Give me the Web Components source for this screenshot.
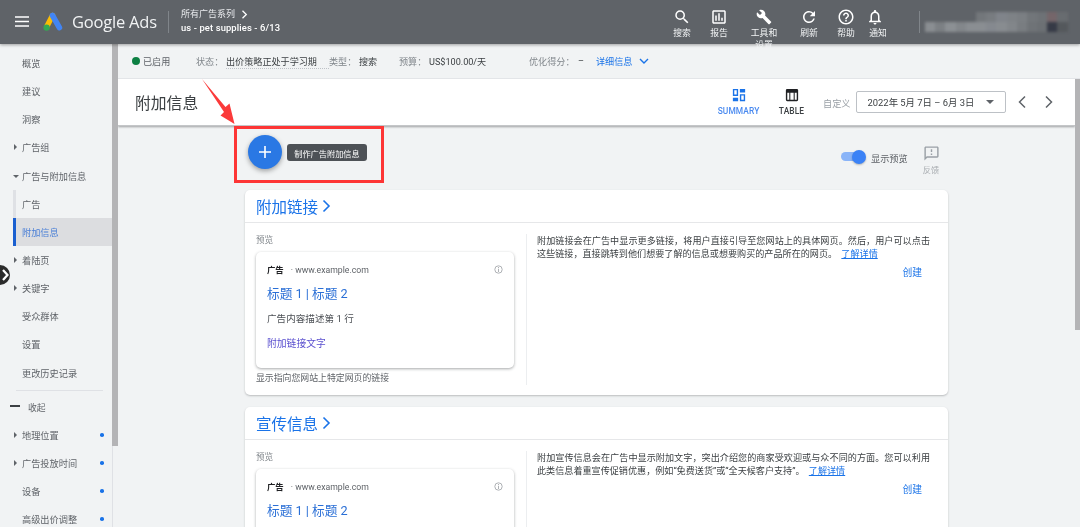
<!DOCTYPE html>
<html lang="zh-CN"><head><meta charset="utf-8"><title>Google Ads</title>
<style>
html,body{margin:0;padding:0;width:1080px;height:527px;overflow:hidden;background:#f1f3f4;
font-family:Roboto,"Noto Sans CJK SC",sans-serif;color:#3c4043}
a{color:inherit}
</style></head><body>
<ga-app>
  <ga-header slot="header"></ga-header>
  <ga-sidebar slot="sidebar">
    <ga-nav>概览</ga-nav><ga-nav>建议</ga-nav><ga-nav>洞察</ga-nav>
    <ga-nav arrow="right">广告组</ga-nav>
    <ga-nav arrow="down">广告与附加信息</ga-nav>
    <ga-nav sub>广告</ga-nav>
    <ga-nav sub active>附加信息</ga-nav>
    <ga-nav arrow="right">着陆页</ga-nav>
    <ga-nav arrow="right">关键字</ga-nav>
    <ga-nav>受众群体</ga-nav><ga-nav>设置</ga-nav><ga-nav>更改历史记录</ga-nav>
    <ga-nav-collapse>收起</ga-nav-collapse>
    <ga-nav arrow="right" dot>地理位置</ga-nav>
    <ga-nav arrow="right" dot>广告投放时间</ga-nav>
    <ga-nav dot>设备</ga-nav>
    <ga-nav dot>高级出价调整</ga-nav>
  </ga-sidebar>
  <ga-status slot="status"></ga-status>
  <ga-title slot="title"></ga-title>
  <ga-toolbar slot="content"></ga-toolbar>
  <ga-card slot="content" heading="附加链接" caption="显示指向您网站上特定网页的链接">
    附加链接会在广告中显示更多链接，将用户直接引导至您网站上的具体网页。然后，用户可以点击这些链接，直接跳转到他们想要了解的信息或想要购买的产品所在的网页。
  </ga-card>
  <ga-card slot="content" heading="宣传信息">
    附加宣传信息会在广告中显示附加文字，突出介绍您的商家受欢迎或与众不同的方面。您可以利用此类信息着重宣传促销优惠，例如“免费送货”或“全天候客户支持”。
  </ga-card>
  <ga-annotation slot="overlay"></ga-annotation>
</ga-app>
<script>
const def=(name,html,extra)=>{
  const t=document.createElement('template');t.innerHTML=html;
  customElements.define(name,class extends HTMLElement{
    constructor(){super();this.attachShadow({mode:'open'}).appendChild(t.content.cloneNode(true));}
    connectedCallback(){if(extra)extra(this,this.shadowRoot);}
  });
};
const P={
 search:'M15.5 14h-.79l-.28-.27A6.471 6.471 0 0 0 16 9.5 6.5 6.5 0 1 0 9.5 16c1.61 0 3.09-.59 4.23-1.57l.27.28v.79l5 4.99L20.49 19l-4.99-5zm-6 0C7.01 14 5 11.99 5 9.5S7.01 5 9.5 5 14 7.01 14 9.5 11.99 14 9.5 14z',
 report:'M19 3H5c-1.1 0-2 .9-2 2v14c0 1.1.9 2 2 2h14c1.1 0 2-.9 2-2V5c0-1.1-.9-2-2-2zm0 16H5V5h14v14zM7 10h2v7H7zm4-3h2v10h-2zm4 6h2v4h-2z',
 build:'M22.7 19l-9.1-9.1c.9-2.3.4-5-1.5-6.9-2-2-5-2.4-7.4-1.3L9 6 6 9 1.6 4.7C.4 7.1.9 10.1 2.9 12.1c1.9 1.9 4.6 2.4 6.9 1.5l9.1 9.1c.4.4 1 .4 1.4 0l2.3-2.3c.5-.4.5-1.1.1-1.4z',
 refresh:'M17.65 6.35A7.958 7.958 0 0 0 12 4c-4.42 0-7.99 3.58-7.99 8s3.57 8 7.99 8c3.73 0 6.84-2.55 7.73-6h-2.08A5.99 5.99 0 0 1 12 18c-3.31 0-6-2.69-6-6s2.69-6 6-6c1.66 0 3.14.69 4.22 1.78L13 11h7V4l-2.35 2.35z',
 help:'M11 18h2v-2h-2v2zm1-16C6.48 2 2 6.48 2 12s4.48 10 10 10 10-4.48 10-10S17.52 2 12 2zm0 18c-4.41 0-8-3.59-8-8s3.59-8 8-8 8 3.59 8 8-3.59 8-8 8zm0-14c-2.21 0-4 1.79-4 4h2c0-1.1.9-2 2-2s2 .9 2 2c0 2-3 1.75-3 5h2c0-2.25 3-2.5 3-5 0-2.21-1.79-4-4-4z',
 bell:'M12 22c1.1 0 2-.9 2-2h-4c0 1.1.89 2 2 2zm6-6v-5c0-3.07-1.64-5.64-4.5-6.32V4c0-.83-.67-1.5-1.5-1.5s-1.5.67-1.5 1.5v.68C7.63 5.36 6 7.92 6 11v5l-2 2v1h16v-1l-2-2zm-2 1H8v-6c0-2.48 1.51-4.5 4-4.5s4 2.02 4 4.5v6z',
 feedback:'M20 2H4c-1.1 0-2 .9-2 2v18l4-4h14c1.1 0 2-.9 2-2V4c0-1.1-.9-2-2-2zm0 14H5.17L4 17.17V4h16v12zM11 12h2v2h-2zm0-6h2v4h-2z'
};
const svg=(d,s,c)=>`<svg width="${s}" height="${s}" viewBox="0 0 24 24" fill="${c}" aria-hidden="true"><path d="${d}"/></svg>`;

def('ga-app',`<style>
:host{display:grid;position:relative;width:1080px;height:527px;overflow:hidden;filter:blur(.3px);
grid-template-columns:118px 1fr;grid-template-rows:44px 35px 1fr;background:#f1f3f4}
.h{grid-column:1/3;grid-row:1;z-index:3;box-shadow:0 1px 3px rgba(0,0,0,.35)}
.s{grid-column:1;grid-row:2/4;min-height:0;overflow:hidden}
.st{grid-column:2;grid-row:2;min-width:0}
.m{grid-column:2;grid-row:3;display:flex;min-height:0;min-width:0}
.col{flex:1;min-width:0;display:flex;flex-direction:column;overflow:hidden}
.c{flex:1;min-height:0;display:flex;flex-direction:column;overflow:hidden}
.bar{width:5px;flex:none}.bar i{display:block;height:251px;background:#b4b4b6}
</style>
<div class="h"><slot name="header"></slot></div>
<div class="s"><slot name="sidebar"></slot></div>
<div class="st"><slot name="status"></slot></div>
<div class="m"><div class="col"><slot name="title"></slot><div class="c"><slot name="content"></slot></div></div>
<div class="bar"><i></i></div></div>
<slot name="overlay"></slot>`);

def('ga-header',`<style>
:host{display:flex;align-items:stretch;height:44px;background:#5f6368;color:#fff;position:relative}
.menu{margin:14px 0 0 15px;width:14px;height:15px}
.logo{margin:11px 0 0 13px;width:22px;height:22px}
.name{margin:0 0 0 8px;font:400 16.5px/44px "Open Sans",Roboto,sans-serif;letter-spacing:-.2px;width:84px;color:#f1f3f4;white-space:nowrap}
.sep{width:1px;height:22px;background:#80858a;margin:11px 12px 0 12px}
.crumb{width:260px;padding-top:7px;font-size:9px;line-height:14px}
.crumb div:first-child{color:#e8eaed;display:flex;align-items:center;gap:6px}
.crumb div:last-child{font-size:9.4px;font-weight:500;margin-top:0;letter-spacing:.12px;line-height:14px}
.tools{display:flex;margin-left:auto;align-items:flex-start}
.acc{width:161px;flex:none;display:flex;position:relative;margin-left:33px}
.acc b{display:block;width:1px;height:22px;background:#80858a;margin-top:11px}
.blur{display:grid;grid-template-columns:repeat(14,10.2px);grid-template-rows:10px 10px;margin:12px 0 0 5px;filter:blur(1.6px)}
.blur span{background:#7b7f84}
</style>
<svg class="menu" viewBox="0 0 14 15" aria-hidden="true"><path d="M0 2.2h14v1.6H0zM0 6.7h14v1.6H0zM0 11.2h14v1.6H0z" fill="#fff"/></svg>
<svg class="logo" viewBox="0 0 22 22" aria-hidden="true">
<path d="M10.5 4.5 4.8 15.5" stroke="#fbbc04" stroke-width="5.4" stroke-linecap="round" fill="none"/>
<circle cx="4.6" cy="16.6" r="3.2" fill="#34a853"/>
<path d="M10.5 4.5 17.4 16.6" stroke="#4285f4" stroke-width="5.6" stroke-linecap="round" fill="none"/></svg>
<div class="name">Google Ads</div><div class="sep"></div>
<div class="crumb"><div>所有广告系列 <svg width="7" height="9" viewBox="0 0 7 9" aria-hidden="true"><path d="M1.5 .8 5.3 4.5 1.5 8.2" fill="none" stroke="#fff" stroke-width="1.3"/></svg></div><div>us - pet supplies - 6/13</div></div>
<div class="tools">
<ga-tool w="36" icon="search">搜索</ga-tool><ga-tool w="38" icon="report">报告</ga-tool>
<ga-tool w="52" icon="build" wrap>工具和设置</ga-tool><ga-tool w="38" icon="refresh">刷新</ga-tool>
<ga-tool w="36" icon="help">帮助</ga-tool><ga-tool w="22" icon="bell">通知</ga-tool></div>
<div class="acc"><b></b><div class="blur" id="b"></div></div>`,(el,r)=>{
 const g=r.getElementById('b');if(g.children.length)return;
 const rows=[['','','','','','#73777b','#787c80','#80848a','#7e8286','#7b7f83','#72767a','#6e7276','#75666a','#686c70'],
 ['#8a8e92','#7c8084','#8c9094','#83878b','#8a8e92','#8a8e92','#85898f','#888c90','#82868a','#797d81','#6f7377','#6c7074','#363a46','#54585c']];
 rows.flat().forEach(c=>{const s=document.createElement('span');s.style.background=c||'transparent';g.appendChild(s);});
});

def('ga-tool',`<style>
:host{display:block;text-align:center;color:#f1f3f4;font-size:8.8px;line-height:11.5px;padding-top:7.5px;box-sizing:border-box;height:60px;flex:none}
#i{display:flex;align-items:center;justify-content:center;height:18px;margin-bottom:2.75px}
svg{display:block}
.l{margin:0 auto;width:28px}
</style><div id="i"></div><div class="l"><slot></slot></div>`,(el,r)=>{
 el.style.width=el.getAttribute('w')+'px';
 const n=el.getAttribute('icon');
 r.getElementById('i').innerHTML=svg(P[n],n==='build'?16:18,'#fff');
});

def('ga-sidebar',`<style>
:host{display:flex;width:118px;height:483px;background:#f1f3f4;position:relative}
.n{width:112.5px;flex:none;box-sizing:border-box;padding-top:5px;border-right:1px solid #dfe1e5}
.t{width:5.5px;flex:none;margin-left:-.5px}.t i{display:block;height:402px;background:#b4b4b6}
.go{position:absolute;left:-10px;top:221px;width:20px;height:20px;border-radius:50%;background:#2b2b2b;display:flex;align-items:center;justify-content:center}
.go svg{margin-left:10px}
</style><div class="n"><slot></slot></div><div class="t"><i></i></div>
<div class="go"><svg width="7" height="12" viewBox="0 0 7 12" aria-hidden="true"><path d="M1 1l4.5 5L1 11" fill="none" stroke="#fff" stroke-width="2.2"/></svg></div>`);

def('ga-nav',`<style>
:host{display:flex;align-items:center;height:28.15px;position:relative;font-size:9.2px;color:#5f6368;padding-left:22px;box-sizing:border-box;white-space:nowrap}
:host([sub]){margin-left:13px;padding-left:6px;border-left:3px solid #dfe1e5}
:host([active]){background:#dcdde0;color:#4a7fd6;border-left-color:#1a5fd0}
.a{position:absolute;left:13px;top:50%;width:0;height:0}
:host([arrow=right]) .a{border-left:3px solid #5f6368;border-top:3px solid transparent;border-bottom:3px solid transparent;margin-top:-3px;margin-left:1px}
:host([arrow=down]) .a{border-top:3px solid #5f6368;border-left:3px solid transparent;border-right:3px solid transparent;margin-top:-1px;margin-left:0}
.d{display:none;position:absolute;left:100px;top:50%;width:3.6px;height:3.6px;margin-top:-1.8px;border-radius:50%;background:#1a73e8}
:host([dot]) .d{display:block}
</style><span class="a"></span><slot></slot><span class="d"></span>`);

def('ga-nav-collapse',`<style>
:host{display:block;font-size:8.8px;color:#5f6368;position:relative;margin-top:3px}
hr{border:0;border-top:1px solid #dfe1e5;margin:0 9px 0 16px}
.r{display:flex;align-items:center;height:27px;padding:3px 0 0 10px;gap:8px}
i{display:block;width:10px;height:1.5px;background:#3c4043;margin-top:-2px}
</style><hr><div class="r"><i></i><span><slot></slot></span></div>`);

def('ga-status',`<style>
:host{display:flex;align-items:center;height:35px;background:#f1f3f4;font-size:9.1px;color:#5f6368;white-space:nowrap;padding-left:14px;box-sizing:border-box;border-bottom:1px solid #e3e5e8}
.dot{width:8px;height:8px;border-radius:50%;background:#0d8043;margin-right:3px}
.k{color:#80868b}.v{color:#3c4043}
.link{color:#1a73e8}
</style>
<span class="dot"></span><span style="width:53px">已启用</span>
<span class="k" style="width:30px">状态：</span><span class="v" style="width:103px;border-bottom:1px dotted #bdc1c6;margin-top:1px">出价策略正处于学习期</span>
<span class="k" style="width:30px">类型：</span><span class="v" style="width:40px">搜索</span>
<span class="k" style="width:30px">预算：</span><span class="v" style="width:100px">US$100.00/天</span>
<span class="k" style="width:49px">优化得分：</span><span class="v" style="width:18px">–</span>
<span class="link">详细信息</span>
<svg style="margin-left:7px" width="10" height="7" viewBox="0 0 10 7" aria-hidden="true"><path d="M1 1l4 4 4-4" fill="none" stroke="#1a73e8" stroke-width="1.4"/></svg>`);

def('ga-title',`<style>
:host{display:flex;align-items:center;height:47px;flex:none;background:#fff;padding-left:17px;box-sizing:border-box;box-shadow:0 1px 2px rgba(60,64,67,.45);position:relative;z-index:1;border-bottom:1px solid #c4c6c8}
h1{font-size:15.8px;font-weight:400;margin:0;color:#3c4043;width:577px}
.tab{width:53px;text-align:center;font-size:8.4px;font-weight:500;letter-spacing:.1px;color:#3c4043;line-height:10px}
.tab svg{display:block;margin:0 auto 4px}
.on{color:#4a8af0}
.cust{font-size:9.2px;color:#9aa0a6;margin:2px 5px 0 5px}
.date{box-sizing:border-box;width:150px;height:22px;border:1px solid #bdc1c6;border-radius:2px;font-size:9.4px;color:#3c4043;display:flex;align-items:center;padding-left:11px;position:relative;white-space:nowrap}
.date i{position:absolute;right:11px;top:8px;border-top:4px solid #5f6368;border-left:4px solid transparent;border-right:4px solid transparent}
.nav{display:flex;margin-left:11px;gap:17px}
</style><h1>附加信息</h1>
<div class="tab on"><svg width="14" height="14" viewBox="0 0 16 16" aria-hidden="true"><path d="M1 1h6v8H1zM2.600 2.600v4.800h2.800V2.600zM9 1h6v4H9zM1 11h6v4H1zM9 7h6v8H9zM10.600 8.600v4.800h2.800V8.600z" fill="#1a73e8" fill-rule="evenodd"/></svg>SUMMARY</div>
<div class="tab"><svg width="14" height="14" viewBox="0 0 16 16" aria-hidden="true"><path d="M2.500 1h11A1.500 1.500 0 0 1 15 2.500v11a1.500 1.500 0 0 1-1.500 1.500h-11A1.500 1.500 0 0 1 1 13.500v-11A1.500 1.500 0 0 1 2.500 1zM2.600 5.500v8h2.300v-8zM6.100 5.500v8h3.800v-8zM11.100 5.500v8h2.300v-8z" fill="#202124" fill-rule="evenodd"/></svg>TABLE</div>
<span class="cust">自定义</span>
<div class="date">2022年 5月 7日 – 6月 3日<i></i></div>
<div class="nav">
<svg width="10" height="14" viewBox="0 0 10 14" aria-hidden="true"><path d="M8 1.500 2.500 7 8 12.500" fill="none" stroke="#5f6368" stroke-width="1.500"/></svg>
<svg width="10" height="14" viewBox="0 0 10 14" aria-hidden="true"><path d="M2 1.500 7.500 7 2 12.500" fill="none" stroke="#5f6368" stroke-width="1.500"/></svg></div>`);

def('ga-toolbar',`<style>
:host{display:flex;height:64px;flex:none;position:relative;box-sizing:border-box;padding-left:130px}
.fab{width:34px;height:34px;border-radius:50%;background:#2a78e4;margin-top:9px;box-shadow:0 2px 5px rgba(0,0,0,.35);display:flex;align-items:center;justify-content:center;flex:none}
.tip{margin:18px 0 0 5px;height:17px;width:80px;box-sizing:border-box;background:#4d5156;color:#fff;border-radius:3px;font-size:8.2px;display:flex;align-items:center;justify-content:center;white-space:nowrap;flex:none}
.sw{margin:24px 0 0 474px;width:25px;height:13px;position:relative;flex:none}
.sw i{position:absolute;left:0;top:2px;width:24px;height:9px;border-radius:5px;background:#8ab4f8}
.sw b{position:absolute;right:0;top:0;width:14px;height:14px;border-radius:50%;background:#3b82f6;box-shadow:0 1px 2px rgba(0,0,0,.25)}
.lbl{margin:25px 0 0 5px;font-size:9.2px;color:#5f6368;width:37px;white-space:nowrap;flex:none}
.fb{margin:19px 0 0 11px;width:24px;text-align:center;font-size:8.2px;color:#a9adb1;line-height:11px;flex:none}
.fb svg{display:block;margin:0 auto 3px}
</style>
<div class="fab"><svg width="14" height="14" viewBox="0 0 14 14" aria-hidden="true"><path d="M6.200 1h1.600v5.200H13v1.600H7.800V13H6.200V7.800H1V6.200h5.200z" fill="#fff"/></svg></div>
<div class="tip">制作广告附加信息</div>
<div class="sw"><i></i><b></b></div><div class="lbl">显示预览</div>
<div class="fb" id="f">反馈</div>`,(el,r)=>{
 r.getElementById('f').insertAdjacentHTML('afterbegin',svg(P.feedback,17,'#9aa0a6'));
});

def('ga-card',`<style>
:host{display:block;margin:0 0 12px 127px;width:703px;flex:none;background:#fff;border-radius:5px;box-shadow:0 1px 2px rgba(60,64,67,.3)}
.head{height:33px;box-sizing:border-box;border-bottom:1px solid #e6e7e9;padding-left:11px;display:flex;align-items:center;gap:4px;color:#1a73e8;font-size:15.500px}
.body{display:flex;padding:10px 18px 10px 11px;height:172px;box-sizing:border-box}
.l{width:271px;flex:none;border-right:1px solid #eceef0;box-sizing:border-box;padding-right:12px;margin-top:1px}
.pv{font-size:8.600px;color:#80868b;line-height:12px;margin-top:0}
.cap{font-size:8.900px;color:#5f6368;line-height:12px;margin-top:4px;white-space:nowrap}
.r{flex:1;padding-left:10px;font-size:9.100px;line-height:12.500px;color:#3c4043;padding-top:2px;text-align:justify;width:393px}
.r a{color:#1a73e8;text-decoration:underline;margin-left:2px}
.cr{font-size:9.800px;color:#1a73e8;text-align:right;padding-right:8px;margin-top:7px}
.desc{width:393px}
</style><div class="head"><span id="h"></span><svg width="9" height="14" viewBox="0 0 9 14" aria-hidden="true"><path d="M1.500 1.500 7 7l-5.500 5.500" fill="none" stroke="#1a73e8" stroke-width="1.600"/></svg></div>
<div class="body"><div class="l"><div class="pv">预览</div><ga-ad></ga-ad><div class="cap" id="c"></div></div>
<div class="r"><div class="desc"><slot></slot> <a>了解详情</a></div><div class="cr">创建</div></div></div>`,(el,r)=>{
 r.getElementById('h').textContent=el.getAttribute('heading');
 r.getElementById('c').textContent=el.getAttribute('caption')||'显示宣传文字';
});

def('ga-ad',`<style>
:host{display:block;margin-top:6px;width:258px;height:116px;box-sizing:border-box;background:#fff;border-radius:5px;box-shadow:0 1px 3px rgba(60,64,67,.45);padding:11px 11px 0;color:#3c4043;position:relative}
.top{font-size:8.700px;line-height:14px;white-space:nowrap;display:flex;align-items:center}
.top b{font-weight:700;color:#202124;font-size:8.400px;margin-right:7px}
.top span{color:#5f6368}
.i{position:absolute;right:11px;top:13px}
.t{font-size:12.700px;color:#2a6fd6;line-height:16px;margin-top:9px;white-space:nowrap}
.d{font-size:9.600px;line-height:14px;margin-top:10px;color:#4d5156;white-space:nowrap}
.l{font-size:9.800px;line-height:14px;margin-top:11px;color:#5a4fcf;white-space:nowrap}
</style><div class="top"><b>广告</b><span>· www.example.com</span></div>
<svg class="i" width="9" height="9" viewBox="0 0 9 9" aria-hidden="true"><circle cx="4.500" cy="4.500" r="3.700" fill="none" stroke="#aeb1b5"/><path d="M4 2h1v1H4zM4 3.800h1V7H4z" fill="#aeb1b5"/></svg>
<div class="t">标题 1 | 标题 2</div><div class="d">广告内容描述第 1 行</div><div class="l">附加链接文字</div>`);

def('ga-annotation',`<style>
:host{display:block;position:absolute;left:0;top:0;width:1080px;height:527px;pointer-events:none;z-index:5}
.box{position:absolute;left:234px;top:126px;width:150px;height:57px;box-sizing:border-box;border:3px solid #fd3535}
svg{position:absolute;left:200px;top:76px}
</style><div class="box"></div>
<svg width="36" height="50" viewBox="0 0 36 50" aria-hidden="true"><path d="M2 3 25.500 31 29.500 27.500 34.500 48 20.500 39.500 24 36Z" fill="#fb3a3a"/></svg>`);
</script>
</body></html>
